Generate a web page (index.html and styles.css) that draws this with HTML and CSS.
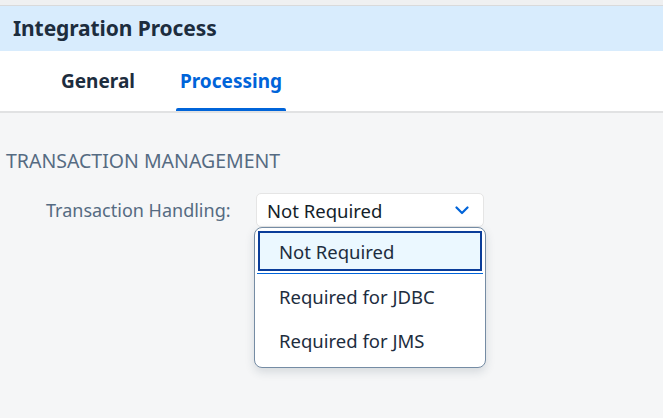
FILE: index.html
```html
<!DOCTYPE html>
<html>
<head>
<meta charset="utf-8">
<link rel="stylesheet" href="styles.css">
</head>
<body>
<div class="topstrip"></div>
<header class="titlebar"><h1 class="title">Integration Process</h1></header>
<nav class="tabs">
  <div class="tab">General</div>
  <div class="tab active">Processing</div>
</nav>
<main class="content">
  <h2 class="section">TRANSACTION MANAGEMENT</h2>
  <div class="row">
    <label class="label">Transaction Handling:</label>
    <div class="field">
      <div class="select">
        <span class="value">Not Required</span>
        <svg class="chev" width="14" height="9" viewBox="0 0 14 9"><path d="M1.5 1.5 L7 7 L12.5 1.5" fill="none" stroke="#0064d9" stroke-width="2.2" stroke-linecap="round" stroke-linejoin="round"/></svg>
      </div>
      <div class="popup">
        <div class="item selected">Not Required</div>
        <div class="sep"></div>
        <div class="item">Required for JDBC</div>
        <div class="item">Required for JMS</div>
      </div>
    </div>
  </div>
</main>
</body>
</html>
```
FILE: styles.css
```css
* { box-sizing: border-box; }
html, body { margin: 0; padding: 0; }
body {
  width: 663px; height: 418px; overflow: hidden;
  background: #f5f6f7;
  font-family: "Noto Sans", "Open Sans", sans-serif;
  color: #1d2d3e;
}
.topstrip { height: 6px; background: #eff0f1; border-bottom: 1px solid #d9dadb; }
.titlebar { height: 45px; background: #d8ecfd; display: flex; align-items: center; padding-left: 13px; padding-bottom: 1px; }
.title { margin: 0; font-size: 21px; font-weight: 700; color: #1d2d3e; letter-spacing: -0.1px; }
.tabs { height: 62px; background: #fff; border-bottom: 2px solid #e1e2e3; display: flex; padding-left: 57px; gap: 37px; }
.tab { position: relative; padding: 0 4px; display: flex; align-items: center; font-size: 19px; font-weight: 700; color: #1d2d3e; height: 60px; }
.tab.active { color: #0064d9; }
.tab.active::after { content: ""; position: absolute; left: 0; right: 0; bottom: 0; height: 3px; background: #0064d9; border-radius: 2px 2px 0 0; }
.content { padding: 38px 6px 0; }
.section { margin: 0; font-size: 19.5px; font-weight: 400; color: #556b82; height: 20px; line-height: 20px; }
.row { display: flex; margin-top: 22px; }
.label { width: 250px; padding-left: 40px; font-size: 18px; color: #556b82; line-height: 34px; }
.field { width: 232px; }
.select { height: 34px; width: 228px; background: #fff; border: 1px solid #e5e5e5; border-radius: 5px; display: flex; align-items: center; justify-content: space-between; padding: 0 14px 0 10px; font-size: 18.5px; color: #131e29; }
.popup { margin-left: -2px; width: 232px; background: #fff; border: 1px solid #758ca4; border-radius: 8px; box-shadow: 0 4px 10px rgba(34,54,73,0.15); padding: 3px 3px 5px; }
.item { height: 44px; display: flex; align-items: center; padding-left: 21px; font-size: 18.5px; color: #1d2d3e; }
.item.selected { height: 40px; border: 2px solid #0a3d99; background: #ebf8ff; padding-left: 19px; }
.sep { height: 1px; background: #0064d9; margin: 2px -1px 0; }
```
